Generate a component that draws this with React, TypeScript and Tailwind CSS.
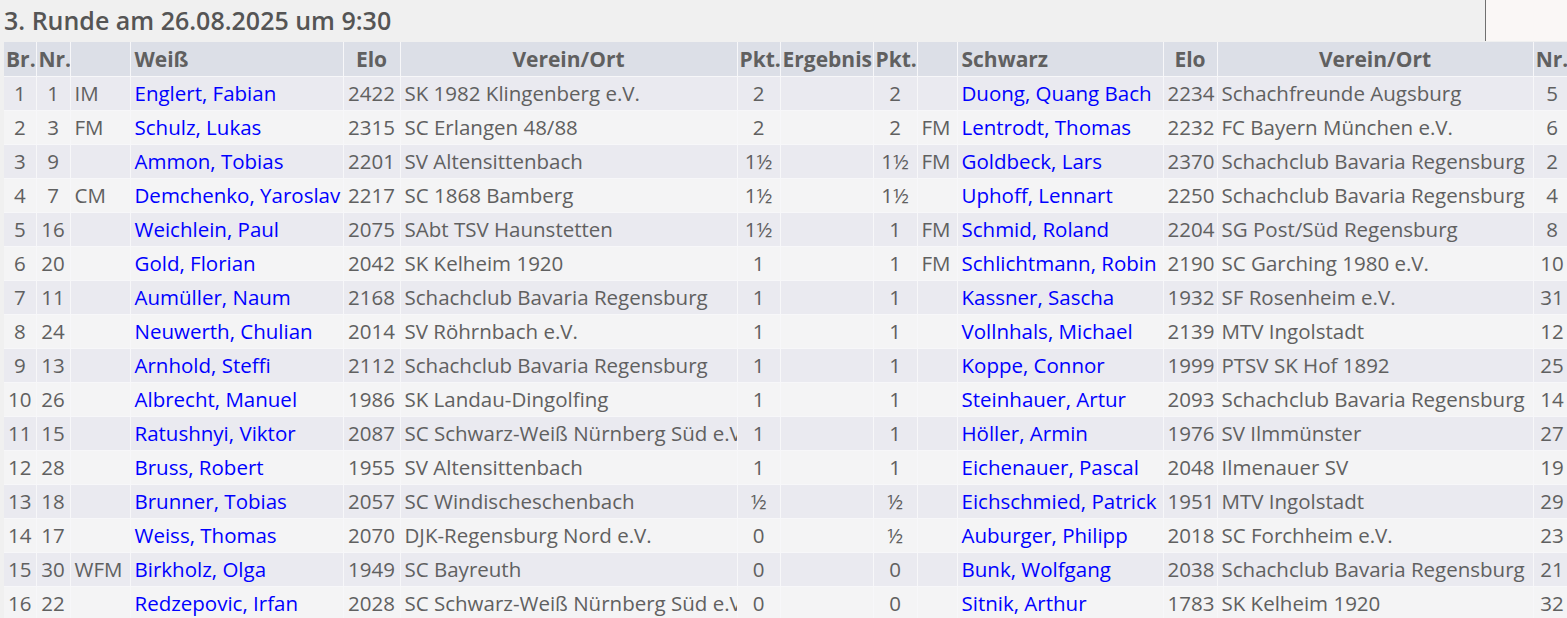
import React from "react";

type Pairing = {
  br: number;
  wNr: number;
  wTitle: string;
  wName: string;
  wElo: number;
  wClub: string;
  wPts: string;
  bPts: string;
  bTitle: string;
  bName: string;
  bElo: number;
  bClub: string;
  bNr: number;
};

const pairings: Pairing[] = [
  { br: 1, wNr: 1, wTitle: "IM", wName: "Englert, Fabian", wElo: 2422, wClub: "SK 1982 Klingenberg e.V.", wPts: "2", bPts: "2", bTitle: "", bName: "Duong, Quang Bach", bElo: 2234, bClub: "Schachfreunde Augsburg", bNr: 5 },
  { br: 2, wNr: 3, wTitle: "FM", wName: "Schulz, Lukas", wElo: 2315, wClub: "SC Erlangen 48/88", wPts: "2", bPts: "2", bTitle: "FM", bName: "Lentrodt, Thomas", bElo: 2232, bClub: "FC Bayern München e.V.", bNr: 6 },
  { br: 3, wNr: 9, wTitle: "", wName: "Ammon, Tobias", wElo: 2201, wClub: "SV Altensittenbach", wPts: "1½", bPts: "1½", bTitle: "FM", bName: "Goldbeck, Lars", bElo: 2370, bClub: "Schachclub Bavaria Regensburg", bNr: 2 },
  { br: 4, wNr: 7, wTitle: "CM", wName: "Demchenko, Yaroslav", wElo: 2217, wClub: "SC 1868 Bamberg", wPts: "1½", bPts: "1½", bTitle: "", bName: "Uphoff, Lennart", bElo: 2250, bClub: "Schachclub Bavaria Regensburg", bNr: 4 },
  { br: 5, wNr: 16, wTitle: "", wName: "Weichlein, Paul", wElo: 2075, wClub: "SAbt TSV Haunstetten", wPts: "1½", bPts: "1", bTitle: "FM", bName: "Schmid, Roland", bElo: 2204, bClub: "SG Post/Süd Regensburg", bNr: 8 },
  { br: 6, wNr: 20, wTitle: "", wName: "Gold, Florian", wElo: 2042, wClub: "SK Kelheim 1920", wPts: "1", bPts: "1", bTitle: "FM", bName: "Schlichtmann, Robin", bElo: 2190, bClub: "SC Garching 1980 e.V.", bNr: 10 },
  { br: 7, wNr: 11, wTitle: "", wName: "Aumüller, Naum", wElo: 2168, wClub: "Schachclub Bavaria Regensburg", wPts: "1", bPts: "1", bTitle: "", bName: "Kassner, Sascha", bElo: 1932, bClub: "SF Rosenheim e.V.", bNr: 31 },
  { br: 8, wNr: 24, wTitle: "", wName: "Neuwerth, Chulian", wElo: 2014, wClub: "SV Röhrnbach e.V.", wPts: "1", bPts: "1", bTitle: "", bName: "Vollnhals, Michael", bElo: 2139, bClub: "MTV Ingolstadt", bNr: 12 },
  { br: 9, wNr: 13, wTitle: "", wName: "Arnhold, Steffi", wElo: 2112, wClub: "Schachclub Bavaria Regensburg", wPts: "1", bPts: "1", bTitle: "", bName: "Koppe, Connor", bElo: 1999, bClub: "PTSV SK Hof 1892", bNr: 25 },
  { br: 10, wNr: 26, wTitle: "", wName: "Albrecht, Manuel", wElo: 1986, wClub: "SK Landau-Dingolfing", wPts: "1", bPts: "1", bTitle: "", bName: "Steinhauer, Artur", bElo: 2093, bClub: "Schachclub Bavaria Regensburg", bNr: 14 },
  { br: 11, wNr: 15, wTitle: "", wName: "Ratushnyi, Viktor", wElo: 2087, wClub: "SC Schwarz-Weiß Nürnberg Süd e.V.", wPts: "1", bPts: "1", bTitle: "", bName: "Höller, Armin", bElo: 1976, bClub: "SV Ilmmünster", bNr: 27 },
  { br: 12, wNr: 28, wTitle: "", wName: "Bruss, Robert", wElo: 1955, wClub: "SV Altensittenbach", wPts: "1", bPts: "1", bTitle: "", bName: "Eichenauer, Pascal", bElo: 2048, bClub: "Ilmenauer SV", bNr: 19 },
  { br: 13, wNr: 18, wTitle: "", wName: "Brunner, Tobias", wElo: 2057, wClub: "SC Windischeschenbach", wPts: "½", bPts: "½", bTitle: "", bName: "Eichschmied, Patrick", bElo: 1951, bClub: "MTV Ingolstadt", bNr: 29 },
  { br: 14, wNr: 17, wTitle: "", wName: "Weiss, Thomas", wElo: 2070, wClub: "DJK-Regensburg Nord e.V.", wPts: "0", bPts: "½", bTitle: "", bName: "Auburger, Philipp", bElo: 2018, bClub: "SC Forchheim e.V.", bNr: 23 },
  { br: 15, wNr: 30, wTitle: "WFM", wName: "Birkholz, Olga", wElo: 1949, wClub: "SC Bayreuth", wPts: "0", bPts: "0", bTitle: "", bName: "Bunk, Wolfgang", bElo: 2038, bClub: "Schachclub Bavaria Regensburg", bNr: 21 },
  { br: 16, wNr: 22, wTitle: "", wName: "Redzepovic, Irfan", wElo: 2028, wClub: "SC Schwarz-Weiß Nürnberg Süd e.V.", wPts: "0", bPts: "0", bTitle: "", bName: "Sitnik, Arthur", bElo: 1783, bClub: "SK Kelheim 1920", bNr: 32 },
];

const th = "h-[34px] px-[2px] font-bold whitespace-nowrap overflow-hidden border-r border-b border-[#f7f7f9]";
const td = "h-[34px] px-[4px] whitespace-nowrap overflow-hidden border-r border-b border-[#f7f7f9]";

export default function App() {
  return (
    <div className="relative min-h-screen bg-[#f0f0f0] text-[#606060] overflow-hidden font-['Open_Sans',sans-serif]">
      {/* side panel edge */}
      <div className="absolute top-0 left-[1485px] right-0 h-[41px] bg-[#faf7f6] border-l border-[#707070]" />

      <h2 className="h-[42px] pl-[4px] pt-[3px] text-[25px] font-semibold text-[#555] leading-[34px]">
        3. Runde am 26.08.2025 um 9:30
      </h2>

      <table className="ml-[4px] table-fixed border-collapse text-[20.5px] leading-[26px] w-[1567px]">
        <colgroup>
          <col className="w-[32px]" />
          <col className="w-[34px]" />
          <col className="w-[60px]" />
          <col className="w-[213px]" />
          <col className="w-[57px]" />
          <col className="w-[337px]" />
          <col className="w-[43px]" />
          <col className="w-[93px]" />
          <col className="w-[44px]" />
          <col className="w-[40px]" />
          <col className="w-[206px]" />
          <col className="w-[54px]" />
          <col className="w-[316px]" />
          <col className="w-[38px]" />
        </colgroup>
        <thead>
          <tr className="bg-[#dcdfe7] text-[21px]">
            <th className={`${th} text-center`}>Br.</th>
            <th className={`${th} text-center`}>Nr.</th>
            <th className={th}></th>
            <th className={`${th} text-left pl-[4px]`}>Weiß</th>
            <th className={`${th} text-center`}>Elo</th>
            <th className={`${th} text-center`}>Verein/Ort</th>
            <th className={`${th} text-center`}>Pkt.</th>
            <th className={`${th} text-center px-0`}>Ergebnis</th>
            <th className={`${th} text-center`}>Pkt.</th>
            <th className={th}></th>
            <th className={`${th} text-left pl-[4px]`}>Schwarz</th>
            <th className={`${th} text-center`}>Elo</th>
            <th className={`${th} text-center`}>Verein/Ort</th>
            <th className={`${th} text-center`}>Nr.</th>
          </tr>
        </thead>
        <tbody>
          {pairings.map((p) => (
            <tr key={p.br} className={p.br % 2 === 1 ? "bg-[#eaeaf0]" : "bg-[#f4f4f5]"}>
              <td className={`${td} text-center px-0`}>{p.br}</td>
              <td className={`${td} text-center px-0`}>{p.wNr}</td>
              <td className={td}>{p.wTitle}</td>
              <td className={`${td} text-[#0000ff]`}>{p.wName}</td>
              <td className={`${td} text-center px-0`}>{p.wElo}</td>
              <td className={td}>{p.wClub}</td>
              <td className={`${td} text-center px-0`}>{p.wPts}</td>
              <td className={td}></td>
              <td className={`${td} text-center px-0`}>{p.bPts}</td>
              <td className={td}>{p.bTitle}</td>
              <td className={`${td} text-[#0000ff]`}>{p.bName}</td>
              <td className={`${td} text-center px-0`}>{p.bElo}</td>
              <td className={td}>{p.bClub}</td>
              <td className={`${td} text-center px-0`}>{p.bNr}</td>
            </tr>
          ))}
        </tbody>
      </table>
    </div>
  );
}
